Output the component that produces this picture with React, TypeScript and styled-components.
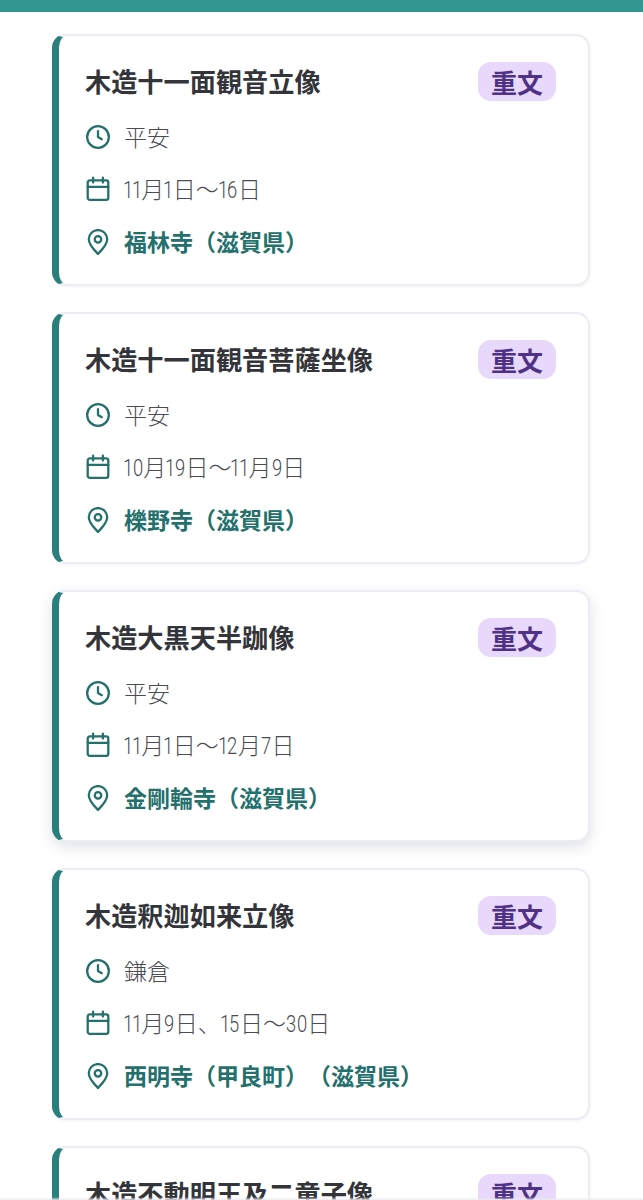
import React from "react";
import styled, { createGlobalStyle } from "styled-components";

const Global = createGlobalStyle`
  html, body { margin: 0; padding: 0; background: #fff; height: 1200px; overflow: hidden; }
  body { font-family: "Noto Sans CJK JP", "Noto Sans", sans-serif; text-spacing-trim: space-all; }
`;

const Page = styled.div`
  position: relative;
  width: 643px;
  height: 1200px;
  overflow: hidden;
  background: #fff;
`;
const TopBar = styled.div`
  height: 12px;
  background: #329691;
`;
const List = styled.div`
  display: flex;
  flex-direction: column;
  gap: 26px;
  padding: 22px 53px 0 52px;
`;
const Card = styled.article<{ $raised?: boolean }>`
  box-sizing: border-box;
  height: 252px;
  flex: none;
  border: 2px solid #ececf4;
  border-left: 7.5px solid #2a7f7c;
  border-radius: 14px;
  padding: 26px 32px 0 26px;
  background: #fff;
  box-shadow: ${(p) =>
    p.$raised
      ? "0 5px 14px rgba(60, 70, 110, 0.16)"
      : "0 1px 3px rgba(80, 90, 130, 0.08)"};
`;
const Head = styled.div`
  display: flex;
  justify-content: space-between;
  align-items: flex-start;
`;
const Title = styled.h2`
  margin: 0;
  font-size: 26.2px;
  line-height: 38px;
  font-weight: 700;
  color: #33353a;
`;
const Badge = styled.span`
  flex: none;
  width: 78px;
  height: 39px;
  border-radius: 13px;
  background: #e8d8fb;
  color: #4f3285;
  font-size: 26px;
  font-weight: 700;
  line-height: 39px;
  text-align: center;
`;
const Rows = styled.div`
  margin-top: 19px;
  display: flex;
  flex-direction: column;
  gap: 19.5px;
`;
const Row = styled.div`
  display: flex;
  align-items: center;
  gap: 13.5px;
  height: 33px;
`;
const IconSlot = styled.svg`
  flex: none;
  width: 26px;
  height: 26px;
  margin-left: -0.5px;
  fill: none;
  stroke: #24706c;
  stroke-width: 2.1;
  stroke-linecap: round;
  stroke-linejoin: round;
`;
const Plain = styled.span`
  font-size: 23px;
  font-weight: 300;
  color: #4a4c52;
  line-height: 33px;
`;
const Digit = styled.span<{ $one: boolean }>`
  display: inline-block;
  width: ${(p) => (p.$one ? 8.6 : 10.6)}px;
  font-family: "Roboto", sans-serif;
  font-weight: 300;
  transform: ${(p) => (p.$one ? "translateX(-1px) scaleX(0.8)" : "scaleX(0.8)")};
  transform-origin: left center;
`;
const Place = styled.span`
  font-size: 23px;
  font-weight: 700;
  color: #24706c;
  line-height: 33px;
`;
const PlaceGroup = styled.span`
  display: inline-block;
`;
const BottomEdge = styled.div`
  position: absolute;
  left: 0;
  right: 0;
  bottom: 0;
  height: 3px;
  background: linear-gradient(to bottom, rgba(235, 235, 240, 0), rgba(235, 235, 240, 0.9));
`;

const Clock = () => (
  <IconSlot viewBox="0 0 24 24">
    <circle cx="12" cy="12" r="10" />
    <path d="M12 6.5V12l3.5 2" />
  </IconSlot>
);
const Calendar = () => (
  <IconSlot viewBox="0 0 24 24">
    <rect x="2.5" y="4" width="19" height="18" rx="2" />
    <path d="M2.5 10h19M7.5 1.5V6M16.5 1.5V6" />
  </IconSlot>
);
const Pin = () => (
  <IconSlot viewBox="0 0 24 24">
    <path d="M12 23c-1.5-1.6-8.5-8-8.5-13.5a8.5 8.5 0 0 1 17 0C20.5 15 13.5 21.4 12 23z" />
    <circle cx="12" cy="9.5" r="3" />
  </IconSlot>
);

const DateText = ({ text }: { text: string }) => (
  <Plain>
    {Array.from(text).map((ch, i) =>
      /\d/.test(ch) ? <Digit key={i} $one={ch === "1"}>{ch}</Digit> : ch
    )}
  </Plain>
);

const PlaceText = ({ text }: { text: string }) => (
  <Place>
    {text.split(/(?<=）)(?=（)/).map((part) => (
      <PlaceGroup key={part}>{part}</PlaceGroup>
    ))}
  </Place>
);

const items = [
  { title: "木造十一面観音立像", era: "平安", date: "11月1日〜16日", place: "福林寺（滋賀県）" },
  { title: "木造十一面観音菩薩坐像", era: "平安", date: "10月19日〜11月9日", place: "櫟野寺（滋賀県）" },
  { title: "木造大黒天半跏像", era: "平安", date: "11月1日〜12月7日", place: "金剛輪寺（滋賀県）", raised: true },
  { title: "木造釈迦如来立像", era: "鎌倉", date: "11月9日、15日〜30日", place: "西明寺（甲良町）（滋賀県）" },
  { title: "木造不動明王及二童子像", era: "平安", date: "11月1日〜16日", place: "滋賀県" },
];

export default function App() {
  return (
    <Page>
      <Global />
      <TopBar />
      <List>
        {items.map((it) => (
          <Card key={it.title} $raised={it.raised}>
            <Head>
              <Title>{it.title}</Title>
              <Badge>重文</Badge>
            </Head>
            <Rows>
              <Row><Clock /><Plain>{it.era}</Plain></Row>
              <Row><Calendar /><DateText text={it.date} /></Row>
              <Row><Pin /><PlaceText text={it.place} /></Row>
            </Rows>
          </Card>
        ))}
      </List>
      <BottomEdge />
    </Page>
  );
}
